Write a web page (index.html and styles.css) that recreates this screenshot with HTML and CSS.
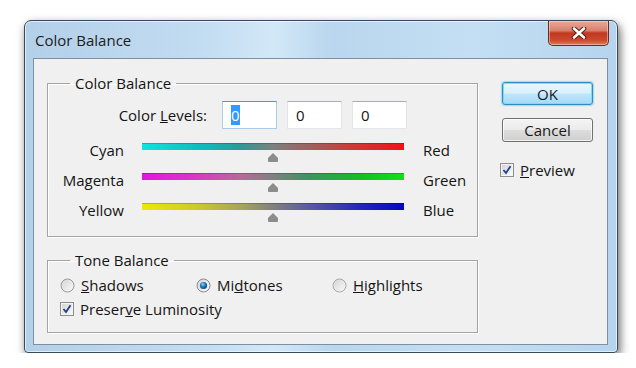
FILE: index.html
```html
<!DOCTYPE html>
<html>
<head>
    <title>Color Balance</title>
    <meta name="viewport" content="width=device-width, initial-scale=1.0">
    <link rel="stylesheet" href="styles.css">
</head>
<body>

<div class="window">
    <div class="titlebar">
        <span class="title">Color Balance</span>
        <button class="close">
            <svg width="16" height="12" viewBox="0 0 16 12">
                <path d="M3 1.5 L13 10.5 M13 1.5 L3 10.5" stroke="#5a1e12" stroke-width="4.6" stroke-linecap="round"/>
                <path d="M3 1.5 L13 10.5 M13 1.5 L3 10.5" stroke="#ffffff" stroke-width="2.6" stroke-linecap="round"/>
            </svg>
        </button>
    </div>
    <div class="client">
        <div class="main">
            <fieldset class="group balance">
                <legend>Color Balance</legend>
                <div class="levels">
                    <span class="levels-label">Color <u>L</u>evels:</span>
                    <div class="field focused"><span class="selected">0</span></div>
                    <div class="field">0</div>
                    <div class="field">0</div>
                </div>
                <div class="sliders">
                    <span class="left">Cyan</span>
                    <div class="track">
                        <div class="bar cyan-red"></div>
                        <svg class="thumb" width="12" height="9" viewBox="0 0 12 9"><path d="M6 0 L11 5 L11 8 Q11 9 10 9 L2 9 Q1 9 1 8 L1 5 Z" fill="#8c8c8c"/></svg>
                    </div>
                    <span class="right">Red</span>

                    <span class="left">Magenta</span>
                    <div class="track">
                        <div class="bar magenta-green"></div>
                        <svg class="thumb" width="12" height="9" viewBox="0 0 12 9"><path d="M6 0 L11 5 L11 8 Q11 9 10 9 L2 9 Q1 9 1 8 L1 5 Z" fill="#8c8c8c"/></svg>
                    </div>
                    <span class="right">Green</span>

                    <span class="left">Yellow</span>
                    <div class="track">
                        <div class="bar yellow-blue"></div>
                        <svg class="thumb" width="12" height="9" viewBox="0 0 12 9"><path d="M6 0 L11 5 L11 8 Q11 9 10 9 L2 9 Q1 9 1 8 L1 5 Z" fill="#8c8c8c"/></svg>
                    </div>
                    <span class="right">Blue</span>
                </div>
            </fieldset>

            <fieldset class="group tone">
                <legend>Tone Balance</legend>
                <div class="radios">
                    <label class="option">
                        <svg width="15" height="15" viewBox="0 0 15 15">
                            <defs><linearGradient id="rg1" x1="0" y1="0" x2="1" y2="1"><stop offset="0" stop-color="#d4d4d4"/><stop offset="1" stop-color="#fbfbfb"/></linearGradient></defs>
                            <circle cx="7.5" cy="7.5" r="6.5" fill="url(#rg1)" stroke="#9a9a9a"/>
                        </svg>
                        <span><u>S</u>hadows</span>
                    </label>
                    <label class="option">
                        <svg width="15" height="15" viewBox="0 0 15 15">
                            <defs><radialGradient id="dot" cx="0.4" cy="0.35" r="0.7"><stop offset="0" stop-color="#8fd0f5"/><stop offset="0.5" stop-color="#1b78c2"/><stop offset="1" stop-color="#0b3f78"/></radialGradient></defs>
                            <circle cx="7.5" cy="7.5" r="6.5" fill="url(#rg1)" stroke="#8a8a8a"/>
                            <circle cx="7.5" cy="7.5" r="3.6" fill="url(#dot)"/>
                        </svg>
                        <span>Mi<u>d</u>tones</span>
                    </label>
                    <label class="option">
                        <svg width="15" height="15" viewBox="0 0 15 15">
                            <circle cx="7.5" cy="7.5" r="6.5" fill="url(#rg1)" stroke="#a8a8a8"/>
                        </svg>
                        <span><u>H</u>ighlights</span>
                    </label>
                </div>
                <label class="option">
                    <svg width="14" height="14" viewBox="0 0 14 14">
                        <defs><linearGradient id="cb" x1="0" y1="0" x2="1" y2="1"><stop offset="0" stop-color="#d6d6d6"/><stop offset="1" stop-color="#f8f8f8"/></linearGradient></defs>
                        <rect x="0.5" y="0.5" width="13" height="13" fill="#f4f4f4" stroke="#8e8e8e"/>
                        <rect x="2" y="2" width="10" height="10" fill="url(#cb)"/>
                        <path d="M3.5 7 L6 10 L10.5 3.2" fill="none" stroke="#213f8f" stroke-width="1.8"/>
                    </svg>
                    <span>Preser<u>v</u>e Luminosity</span>
                </label>
            </fieldset>
        </div>

        <div class="side">
            <button class="btn default">OK</button>
            <button class="btn">Cancel</button>
            <label class="option preview">
                <svg width="14" height="14" viewBox="0 0 14 14">
                    <rect x="0.5" y="0.5" width="13" height="13" fill="#f4f4f4" stroke="#8e8e8e"/>
                    <rect x="2" y="2" width="10" height="10" fill="url(#cb)"/>
                    <path d="M3.5 7 L6 10 L10.5 3.2" fill="none" stroke="#213f8f" stroke-width="1.8"/>
                </svg>
                <span><u>P</u>review</span>
            </label>
        </div>
    </div>
</div>

</body>
</html>
```

FILE: styles.css
```css
body {
    font-family: "Open Sans", "Noto Sans", "DejaVu Sans", sans-serif;
    font-size: 15px;
    color: #141414;
    background: #fff;
    margin: 0;
    padding: 20px 0 0 24px;
    overflow: hidden;
}
.window {
    width: 594px;
    height: 333px;
    box-sizing: border-box;
    border: 1px solid #38495a;
    border-radius: 7px 7px 4px 4px;
    padding: 0 9px 7px 8px;
    background: linear-gradient(to right, #b3d0e9 0%, #c2dcf1 30%, #d2e8f7 42%, #b9d6ee 52%, #c4dff3 75%, #b6d4ee 100%);
    box-shadow: 2px 4px 10px rgba(0, 0, 0, 0.6), inset 0 0 0 1px rgba(255, 255, 255, 0.6);
}
.titlebar {
    height: 37px;
    display: flex;
    align-items: center;
    justify-content: space-between;
}
.title {
    padding-left: 2px;
    color: #1c1c1c;
}
.close {
    align-self: flex-start;
    width: 61px;
    height: 25px;
    margin-right: -1px;
    padding: 0;
    border: 1px solid #6e2a20;
    border-top: none;
    border-radius: 0 0 5px 5px;
    background: linear-gradient(#e9a99a 0%, #d9806c 40%, #c0381f 50%, #cc4a2e 80%, #e07a5c 100%);
    box-shadow: inset 0 0 0 1px rgba(255, 220, 210, 0.5);
    display: flex;
    align-items: center;
    justify-content: center;
}
.client {
    height: 287px;
    box-sizing: border-box;
    border: 1px solid #7c8fa3;
    background: #f0f0f0;
    display: flex;
    gap: 24px;
    padding: 15px 0 0 13px;
}
.main {
    width: 431px;
}
.group {
    margin: 0;
    padding: 0;
    border: 1px solid #a3a3a3;
    box-shadow: inset 1px 1px 0 #fff, 1px 1px 0 #fff;
    min-width: 0;
}
.group legend {
    margin-left: 22px;
    padding: 0 5px;
    line-height: 19px;
}
.balance {
    height: 161px;
}
.levels {
    display: flex;
    align-items: center;
    gap: 10px;
    margin-top: 8px;
}
.levels-label {
    width: 159px;
    margin-right: 5px;
    text-align: right;
}
.field {
    width: 55px;
    height: 28px;
    box-sizing: border-box;
    border: 1px solid #e2e5ea;
    border-top-color: #abadb3;
    background: #fff;
    padding-left: 8px;
    line-height: 26px;
}
.field.focused {
    border-color: #a9cbe8;
    border-top-color: #5d92c4;
}
.selected {
    background: #3399ff;
    color: #fff;
}
.sliders {
    display: grid;
    grid-template-columns: 76px 262px auto;
    grid-auto-rows: 30px;
    column-gap: 18px;
    margin-top: 6px;
}
.left {
    text-align: right;
    line-height: 31px;
}
.right {
    padding-left: 1px;
    line-height: 31px;
}
.track {
    position: relative;
}
.bar {
    margin-top: 8px;
    height: 7px;
    box-shadow: inset 0 1px 0 rgba(0, 0, 0, 0.2);
}
.cyan-red {
    background: linear-gradient(to right, #10e2e2 0%, #10bcbc 22%, #2f9a92 38%, #7c8080 50%, #a06060 64%, #d43232 84%, #f01212 100%);
}
.magenta-green {
    background: linear-gradient(to right, #e414e4 0%, #d83cc0 22%, #b46c98 38%, #7e8080 50%, #3c9460 64%, #12c022 84%, #10e214 100%);
}
.yellow-blue {
    background: linear-gradient(to right, #eaea06 0%, #c8c82e 22%, #a4a45c 38%, #808080 50%, #5a5aa0 64%, #2424bc 84%, #0606c4 100%);
}
.thumb {
    position: absolute;
    left: 125px;
    top: 18px;
}
.tone {
    margin-top: 14px;
    height: 80px;
}
.radios {
    display: grid;
    grid-template-columns: 136px 136px 136px;
    padding-left: 12px;
    margin-top: 5px;
}
.option {
    display: flex;
    align-items: center;
    gap: 6px;
    height: 20px;
}
.tone > .option {
    padding-left: 12px;
    margin-top: 4px;
}
.side {
    width: 91px;
    display: flex;
    flex-direction: column;
    padding-top: 8px;
}
.btn {
    font-family: inherit;
    font-size: 15px;
    color: #1a1a1a;
    height: 24px;
    padding: 0;
    border: 1px solid #707070;
    border-radius: 3px;
    background: linear-gradient(#f4f4f4 0%, #ebebeb 48%, #dddddd 52%, #cfcfcf 100%);
    box-shadow: inset 0 0 0 1px rgba(255, 255, 255, 0.7);
    margin-bottom: 13px;
}
.btn.default {
    height: 23px;
    border-color: #2f8fc0;
    background: linear-gradient(#eaf6fd 0%, #d9f0fc 48%, #bee6fd 52%, #a7d9f5 100%);
    box-shadow: inset 0 0 0 1px #7fdaf7, 0 0 1px 1px rgba(90, 190, 230, 0.5);
}
.preview {
    margin-top: 5px;
    margin-left: -2px;
}
```
